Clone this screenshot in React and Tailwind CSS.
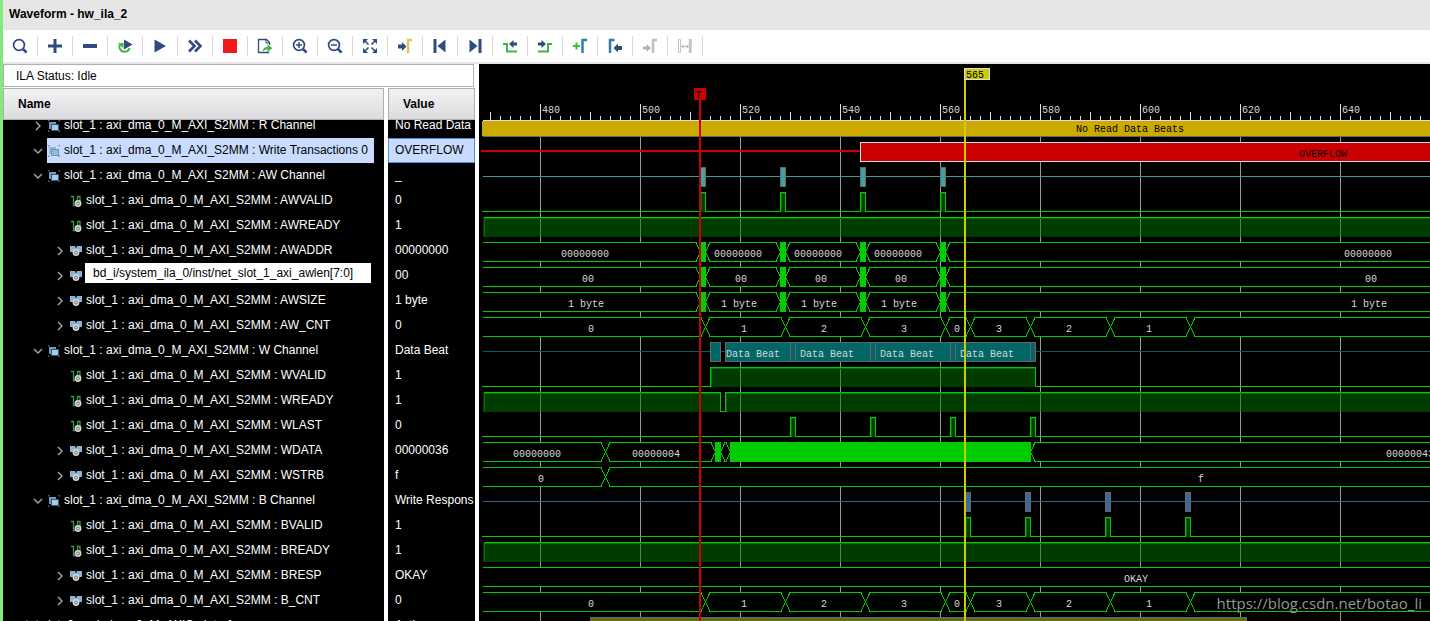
import React from "react";

const NAVY = "#2f4b80";
const GREEN = "#3fb83f";
const STEEL = "#2f7fae";

/* ---------- toolbar icons ---------- */

const Icon = ({ children, size = 16 }) => (
  <svg width={size} height={size} viewBox="0 0 16 16" fill="none" aria-hidden="true">
    {children}
  </svg>
);

const Lens = ({ children }) => (
  <Icon>
    <circle cx="7" cy="7" r="5.4" stroke={NAVY} strokeWidth="1.7" />
    <path d="M11 11l3.6 3.6" stroke={NAVY} strokeWidth="2.6" />
    {children}
  </Icon>
);

const ARROW_RIGHT = "M1 6.5h4V4l4.500 4.500L5 13v-2.500H1z";
const ARROW_LEFT = "M15 8h-4V5.500L6.500 10l4.500 4.500V12h4z";

const tools = [
  ["Find", <Lens />],
  ["Add", <Icon><path d="M1 8h14M8 1v14" stroke={NAVY} strokeWidth="3" /></Icon>],
  ["Remove", <Icon><path d="M1 8h14" stroke={NAVY} strokeWidth="4" /></Icon>],
  ["Toggle auto re-trigger", (
    <Icon>
      <path d="M2.700 6.500C1.500 10.500 4 13.800 7 13.800c3 0 5-1.800 5.500-3.800" stroke={GREEN} strokeWidth="2" />
      <path d="M1 5h5.500v5.500z" fill={GREEN} />
      <path d="M7 1.500l8.500 5L7 11.500z" fill={NAVY} />
    </Icon>
  )],
  ["Run trigger", <Icon><path d="M2.500 1.500l11.500 6.500-11.500 6.500z" fill={NAVY} /></Icon>],
  ["Run trigger immediate", <Icon><path d="M2 2.500L7.500 8 2 13.500M8 2.500L13.500 8 8 13.500" stroke={NAVY} strokeWidth="2.600" /></Icon>],
  ["Stop trigger", <Icon><rect x="1" y="1" width="14" height="14" fill="#ee1c1c" /></Icon>],
  ["Export data", (
    <Icon>
      <path d="M12.500 7V4.500l-3-3h-8v13h10v-1" stroke={NAVY} strokeWidth="1.300" />
      <path d="M9 1.500V5h3.500" stroke={NAVY} strokeWidth="1" />
      <path d="M5.500 14c.3-3.500 2-5 5-5V6.500L15.500 10.200l-5 3.500V11.500c-2 0-3.500.5-5 2.500z" fill={GREEN} />
    </Icon>
  )],
  ["Zoom in", <Lens><path d="M4 7h6M7 4v6" stroke={NAVY} strokeWidth="1.500" /></Lens>],
  ["Zoom out", <Lens><path d="M4 7h6" stroke={NAVY} strokeWidth="1.500" /></Lens>],
  ["Zoom fit", (
    <Icon>
      <path d="M1 1h5L1 6zM15 1v5l-5-5zM1 15v-5l5 5zM15 15h-5l5-5z" fill={NAVY} />
      <path d="M3 3l3.500 3.500M13 3L9.500 6.500M3 13l3.500-3.500M13 13L9.500 9.500" stroke={NAVY} strokeWidth="1.600" />
    </Icon>
  )],
  ["Go to cursor", (
    <Icon>
      <path d={ARROW_RIGHT} fill={NAVY} />
      <path d="M11 15V2H15" stroke="#dfc55c" strokeWidth="2.500" />
    </Icon>
  )],
  ["Go to first", <Icon><path d="M1.500 1h3v14h-3zM13.500 1.500v13L5.500 8z" fill={NAVY} /></Icon>],
  ["Go to last", <Icon><path d="M11.500 1h3v14h-3zM2.500 1.500v13l8-6.500z" fill={NAVY} /></Icon>],
  ["Previous transition", (
    <Icon>
      <path d="M1 6h4v7.500h10" stroke={GREEN} strokeWidth="2" />
      <path d="M15 4.500h-3.500V2L7 6l4.500 4V7.500H15z" fill={NAVY} />
    </Icon>
  )],
  ["Next transition", (
    <Icon>
      <path d="M15 6h-4v7.500H1" stroke={GREEN} strokeWidth="2" />
      <path d="M1 4.500h3.500V2L9 6l-4.500 4V7.500H1z" fill={NAVY} />
    </Icon>
  )],
  ["Add marker", (
    <Icon>
      <path d="M1 8h7M4.500 4.500v7" stroke={GREEN} strokeWidth="2" />
      <path d="M10.500 15V2H15" stroke={STEEL} strokeWidth="2.500" />
    </Icon>
  )],
  ["Previous marker", (
    <Icon>
      <path d="M3 15V2h4.500" stroke={STEEL} strokeWidth="2.500" />
      <path d={ARROW_LEFT} fill={NAVY} />
    </Icon>
  )],
  ["Next marker", (
    <Icon>
      <path d="M1 8.500h3.500V6L9 10l-4.500 4v-2.500H1z" fill="#b4b4b4" />
      <path d="M11 15V2h4" stroke="#c0c0c0" strokeWidth="2.500" />
    </Icon>
  ), true],
  ["Swap cursors", (
    <Icon>
      <path d="M1.500 1.500h2v13h-2z" stroke="#c4c4c4" />
      <path d="M12.500 1v14M14 1v14" stroke="#c4c4c4" strokeWidth="1.500" />
      <path d="M4 8.500h8" stroke="#b8b8b8" />
      <path d="M4 8.500l2.500-2v4zM12 8.500l-2.500-2v4z" fill="#b8b8b8" />
    </Icon>
  ), true],
];

/* ---------- signal tree icons ---------- */

const GroupIcon = ({ faded }) => (
  <svg width="12" height="12" viewBox="0 0 12 12" aria-hidden="true">
    <path d="M0 2V0h2M10 0h2v2M12 10v2h-2M2 12H0v-2" fill="none" stroke="#777" />
    <rect x="1" y="2" width="7" height="7" fill={faded ? "#8fb6d2" : "#6f9abd"} />
    <rect x="3.500" y="4.500" width="7" height="6" fill={faded ? "#93bdd6" : "#a4cce4"} stroke={faded ? "#6d94b5" : "#34597c"} />
  </svg>
);

const Knob = ({ x, y }) => (
  <g>
    <circle cx={x} cy={y} r="3.400" fill="#d8d8d8" />
    <circle cx={x} cy={y} r="1.500" fill="#d8d8d8" stroke="#777" strokeWidth="1" />
  </g>
);

const ScalarIcon = () => (
  <svg width="12" height="12" viewBox="0 0 12 12" aria-hidden="true">
    <path d="M1 1.500h2.500V10.500H5M7.500 8V1.500M10 8V1.500M7 1.500h3.500" fill="none" stroke="#35a046" strokeWidth="1.300" />
    <Knob x={8} y={8.5} />
  </svg>
);

const BusIcon = () => (
  <svg width="12" height="12" viewBox="0 0 12 12" aria-hidden="true">
    <path d="M0 1h5l1 2.500L7 1h5v6H8L6 5 4 7H0z" fill="#8ab4cf" />
    <Knob x={6} y={7.5} />
  </svg>
);

const Chevron = ({ open }) => (
  <svg width="10" height="10" viewBox="0 0 10 10" fill="none" stroke="#a8a8a8" strokeWidth="1.400" aria-hidden="true">
    <path d={open ? "M1 3l4 4 4-4" : "M3 1l4 4-4 4"} />
  </svg>
);

/* ---------- signal data ---------- */

const P = "slot_1 : axi_dma_0_M_AXI_S2MM : ";
const pulsesAW = [512, 528, 544, 560];
const pulsesB = [565, 577, 593, 609];
const awEdges = [512, 513, 528, 529, 544, 545, 560, 561];
const awBlocks = [[512, 513.2], [528, 529.2], [544, 545.2], [560, 561.2]];
const cntEdges = [513, 529, 545, 561, 566, 578, 594, 610];
const cntLabels = [[109, "0"], [262, "1"], [342, "2"], [422, "3"], [475, "0"], [517, "3"], [587, "2"], [667, "1"]];
const repeat = (xs, text) => xs.map((x) => [x, text]);

const signals = [
  { name: P + "R Channel", value: "No Read Data", kind: "group", level: 1, clipped: true, wave: { type: "reads" } },
  { name: P + "Write Transactions 0", value: "OVERFLOW", kind: "group", level: 1, open: true, selected: true, wave: { type: "overflow" } },
  { name: P + "AW Channel", value: "_", kind: "group", level: 1, open: true, wave: { type: "events", at: pulsesAW, line: "#3a9c9c", fill: "#3aa6a6" } },
  { name: P + "AWVALID", value: "0", kind: "scalar", level: 2, wave: { type: "bit", highs: pulsesAW.map((t) => [t, t + 1]) } },
  { name: P + "AWREADY", value: "1", kind: "scalar", level: 2, wave: { type: "bit", highs: [[468.6, 900]] } },
  { name: P + "AWADDR", value: "00000000", kind: "bus", level: 2, wave: { type: "bus", edges: awEdges, blocks: awBlocks, labels: repeat([82, 235, 315, 395, 865], "00000000") } },
  { name: P + "AWLEN", value: "00", kind: "bus", level: 2, tip: "bd_i/system_ila_0/inst/net_slot_1_axi_awlen[7:0]", wave: { type: "bus", edges: awEdges, blocks: awBlocks, labels: repeat([103, 256, 336, 416, 886], "00") } },
  { name: P + "AWSIZE", value: "1 byte", kind: "bus", level: 2, wave: { type: "bus", edges: awEdges, blocks: awBlocks, labels: repeat([89, 242, 322, 402, 872], "1 byte") } },
  { name: P + "AW_CNT", value: "0", kind: "bus", level: 2, wave: { type: "bus", edges: cntEdges, labels: cntLabels } },
  { name: P + "W Channel", value: "Data Beat", kind: "group", level: 1, open: true, wave: { type: "beats" } },
  { name: P + "WVALID", value: "1", kind: "scalar", level: 2, wave: { type: "bit", highs: [[514, 579]] } },
  { name: P + "WREADY", value: "1", kind: "scalar", level: 2, wave: { type: "bit", highs: [[468.6, 516], [517, 900]] } },
  { name: P + "WLAST", value: "0", kind: "scalar", level: 2, wave: { type: "bit", highs: [[530, 531], [546, 547], [562, 563], [578, 579]] } },
  { name: P + "WDATA", value: "00000036", kind: "bus", level: 2, wave: { type: "bus", edges: [493, 515, 516, 518, 578], blocks: [[515, 516.2], [518, 578.2]], labels: [[34, "00000000"], [153, "00000004"], [907, "00000043"]] } },
  { name: P + "WSTRB", value: "f", kind: "bus", level: 2, wave: { type: "bus", edges: [493], labels: [[59, "0"], [719, "f"]] } },
  { name: P + "B Channel", value: "Write Respons", kind: "group", level: 1, open: true, wave: { type: "events", at: pulsesB, line: "#33628c", fill: "#3b6a96" } },
  { name: P + "BVALID", value: "1", kind: "scalar", level: 2, wave: { type: "bit", highs: pulsesB.map((t) => [t, t + 1]) } },
  { name: P + "BREADY", value: "1", kind: "scalar", level: 2, wave: { type: "bit", highs: [[468.6, 900]] } },
  { name: P + "BRESP", value: "OKAY", kind: "bus", level: 2, wave: { type: "bus", edges: [], labels: [[645, "OKAY"]] } },
  { name: P + "B_CNT", value: "0", kind: "bus", level: 2, wave: { type: "bus", edges: cntEdges, labels: cntLabels } },
  { name: "slot_2 : axi_dma_0_M_AXIS : Interface", value: "Active", kind: "group", level: 0, wave: { type: "stream" } },
];

/* ---------- waveform drawing ---------- */

const PX = 5;
const X = (t) => 61 + Math.round((t - 480) * PX);
const LEFT = 4;
const RIGHT = 2200;
const RULER = 56;
const GRN = "#00cc00";

const Labels = ({ items, fill = "#d8d8d8", y = 19 }) =>
  items.map(([x, text]) => (
    <text key={x} x={x} y={y} fill={fill}>{text}</text>
  ));

const HLine = ({ y, color, h = 1, x = LEFT, to = RIGHT }) => (
  <rect x={x} y={y} width={to - x} height={h} fill={color} />
);

function Bit({ highs }) {
  let d = `M${LEFT - 1} 23.5`;
  highs.forEach(([a, b], i) => {
    const xa = X(a) + 0.5;
    const xb = X(b) + 0.5;
    d += i === 0 && a < 469 ? `M${xa} 4.5H${xb}V23.5` : `H${xa}V4.5H${xb}V23.5`;
  });
  d += `H${RIGHT}`;
  return (
    <g>
      {highs.map(([a, b]) => (
        <g key={a}>
          <rect x={X(a)} y="5" width={X(b) - X(a)} height="19" fill="#007800" fillOpacity="0.500" />
          <path d={`M${X(a) + 1.5} 24V5.5H${X(b)}`} fill="none" stroke="#007000" />
        </g>
      ))}
      <path d={d} fill="none" stroke={GRN} />
    </g>
  );
}

function Bus({ edges, blocks = [], labels }) {
  return (
    <g>
      <rect x={LEFT} y="4" width={RIGHT} height="20" fill="#000" />
      <HLine y={4} color={GRN} />
      <HLine y={23} color={GRN} />
      {edges.map((t) => (
        <g key={t}>
          <rect x={X(t) - 4} y="4" width="9" height="20" fill="#000" />
          <path
            d={`M${X(t) - 4} 4.5L${X(t) + 5} 23.5M${X(t) + 5} 4.5L${X(t) - 4} 23.5`}
            fill="none"
            stroke={GRN}
          />
        </g>
      ))}
      {blocks.map(([a, b]) => (
        <rect key={a} x={X(a)} y="4" width={X(b) - X(a)} height="20" fill={GRN} />
      ))}
      <Labels items={labels} />
    </g>
  );
}

const Events = ({ at, line, fill }) => (
  <g>
    <HLine y={13} color={line} />
    {at.map((t) => (
      <rect key={t} x={X(t) + 0.5} y="4.500" width="5" height="19" fill={fill} stroke="#666" />
    ))}
  </g>
);

const Beats = () => (
  <g>
    <HLine y={13} color="#065a5a" />
    {[[514, 516], [517, 530], [530, 531], [531, 546], [546, 547], [547, 562], [562, 563], [563, 578], [578, 579]].map(([a, b]) => (
      <rect key={a} x={X(a) + 0.5} y="4.500" width={X(b) - X(a)} height="19" fill="#006666" stroke="#666" />
    ))}
    <Labels items={repeat([247, 321, 401, 481], "Data Beat")} />
  </g>
);

const Reads = () => (
  <g>
    <rect x={LEFT - 1} y="8" width={RIGHT} height="15" fill="#ccaa00" />
    <HLine y={23} color="#666" />
    <Labels items={[[597, "No Read Data Beats"]]} fill="#000" />
  </g>
);

const Overflow = () => (
  <g>
    <HLine y={12} h={2} x={2} to={X(544)} color="#cc0000" />
    <rect x={X(544) + 0.5} y="4.500" width={RIGHT} height="19" fill="#cc0000" stroke="#ddd" />
    <Labels items={[[820, "OVERFLOW"]]} fill="#000" />
  </g>
);

const Stream = () => (
  <rect x={X(490)} y="4.500" width="656" height="19" fill="#5a6e1c" stroke="#666" />
);

const kinds = { bit: Bit, bus: Bus, events: Events, beats: Beats, reads: Reads, overflow: Overflow, stream: Stream };

function Waveform() {
  const ticks = Array.from({ length: 170 }, (_, i) => 470 + i * 2);
  const majors = ticks.filter((t) => t % 20 === 0);
  return (
    <svg
      role="img"
      aria-label="Captured waveforms"
      className="block h-full w-full font-['Liberation_Mono',monospace] text-[10px]"
      shapeRendering="crispEdges"
    >
      {majors.map((t) => (
        <rect key={t} x={X(t)} y={RULER} width="1" height="1200" fill="#999" />
      ))}
      {ticks.map((t) => {
        const h = t % 20 === 0 ? 16 : t % 10 === 0 ? 8 : 4;
        return <rect key={t} x={X(t)} y={RULER - h} width="1" height={h} fill="#ddd" />;
      })}
      {majors.map((t) => (
        <text key={t} x={X(t) + 2} y="49" fill="#d8d8d8">{t}</text>
      ))}
      {signals.map((s, i) => {
        const Draw = kinds[s.wave.type];
        return (
          <g key={s.name} transform={`translate(0 ${49 + i * 25})`}>
            <Draw {...s.wave} />
          </g>
        );
      })}
      <HLine y={RULER} color="#ddd" />
      <rect x={X(512) - 1} y="36" width="2" height="1200" fill="#cc0000" />
      <rect x={X(512) - 6} y="24" width="12" height="12" fill="#cc0000" />
      <text x={X(512) - 5} y="34" fill="#000" className="font-bold">T</text>
      <rect x={X(565) - 1} y="16" width="2" height="1200" fill="#cccc00" />
      <rect x={X(565) - 0.5} y="4.500" width="25" height="11" fill="#cccc00" stroke="#ddd" />
      <text x={X(565) + 1} y="14" fill="#000">565</text>
    </svg>
  );
}

/* ---------- signal table ---------- */

const treeIcons = { group: GroupIcon, scalar: ScalarIcon, bus: BusIcon };
const indents = ["pl-[7px]", "pl-[29px]", "pl-[51px]"];

function SignalRow({ signal }) {
  const { name, value, kind, level, open, selected, clipped, tip } = signal;
  const KindIcon = treeIcons[kind];
  const height = clipped ? "h-[18px]" : "h-[25px]";
  return (
    <tr>
      <td className="border-r-4 border-white p-0">
        <div className={`relative flex items-end overflow-hidden ${height} ${indents[level]}`}>
          <div className="flex h-[25px] shrink-0 items-center">
            <span className="flex w-[15px] shrink-0 items-center pl-px">
              {kind !== "scalar" && level > 0 && (
                <button type="button" aria-label={`${open ? "Collapse" : "Expand"} ${name}`}>
                  <Chevron open={open} />
                </button>
              )}
            </span>
            <span className={`flex h-full items-center gap-1 whitespace-nowrap pl-px pr-1.5 ${selected ? "bg-[#c9dcff] text-black" : ""}`}>
              <KindIcon faded={selected} />
              {!tip && <span className="pb-0.5">{name}</span>}
            </span>
          </div>
          {tip && (
            <div role="tooltip" className="absolute left-[82px] top-0 flex h-5 items-center whitespace-nowrap bg-white pl-2 pr-[18px] text-black">
              {tip}
            </div>
          )}
        </div>
      </td>
      <td className="p-0">
        <div
          className={`flex items-end overflow-hidden whitespace-nowrap pl-[7px] ${height} ${
            selected ? "bg-[#c9dcff] text-black outline outline-1 -outline-offset-1 outline-[#4a90d9]" : ""
          }`}
        >
          <span className="flex h-[25px] shrink-0 items-center pb-0.5">{value}</span>
        </div>
      </td>
    </tr>
  );
}

const headCell = "border border-[#b0b0b0] bg-gradient-to-b from-[#f2f2f3] to-[#dcdce0] p-0 pl-[14px] text-left font-bold";

export default function App() {
  return (
    <main className="flex h-screen flex-col overflow-hidden border-l-[3px] border-[#84e87c] bg-white font-['Liberation_Sans',Arial,sans-serif] text-xs text-black">
      <header className="flex h-[30px] shrink-0 items-center bg-[#e6e6e6] px-[6px] pb-[2px]">
        <h1 className="font-bold">Waveform - hw_ila_2</h1>
      </header>

      <div role="toolbar" aria-label="Waveform" className="flex h-8 shrink-0 items-center">
        {tools.map(([label, icon, disabled]) => (
          <button
            key={label}
            type="button"
            title={label}
            aria-label={label}
            disabled={disabled}
            className="flex h-5 w-[35px] shrink-0 items-center justify-center border-r border-[#d8d8d8]"
          >
            {icon}
          </button>
        ))}
      </div>

      <div className="flex min-h-0 flex-1 border-t-2 border-[#e6e6e6]">
        <section className="flex w-[472px] shrink-0 flex-col overflow-hidden">
          <p className="mb-px mr-px flex h-[23px] shrink-0 items-center border border-[#b0b0b0] px-3">ILA Status:&nbsp;Idle</p>
          <div className="min-h-0 flex-1 overflow-hidden bg-black">
            <table className="w-full table-fixed border-separate border-spacing-0 text-white">
              <colgroup>
                <col className="w-[385px]" />
                <col />
              </colgroup>
              <thead className="text-black">
                <tr className="h-8">
                  <th scope="col" className="border-r-4 border-white p-0">
                    <div className={`flex h-8 items-center ${headCell}`}>Name</div>
                  </th>
                  <th scope="col" className="p-0">
                    <div className={`flex h-8 items-center ${headCell}`}>Value</div>
                  </th>
                </tr>
              </thead>
              <tbody>
                {signals.map((s) => (
                  <SignalRow key={s.name} signal={s} />
                ))}
              </tbody>
            </table>
          </div>
        </section>

        <section className="relative ml-1 min-w-0 flex-1 overflow-hidden bg-black">
          <Waveform />
          <p className="absolute bottom-2 right-2 font-['Open_Sans',sans-serif] text-[15px] leading-5 text-[#969696]">
            https://blog.csdn.net/botao_li
          </p>
        </section>
      </div>
    </main>
  );
}
